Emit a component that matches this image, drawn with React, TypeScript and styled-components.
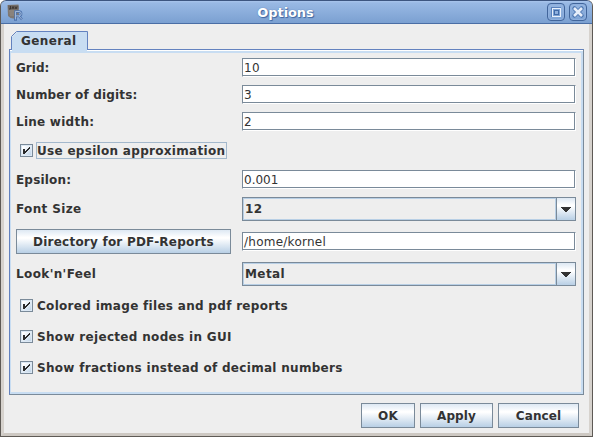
import React from "react";
import styled, { createGlobalStyle } from "styled-components";

const Global = createGlobalStyle`
  * { box-sizing: border-box; }
  body { margin: 0; background: #fff; overflow: hidden; }
`;

const steel = "#7a8a99";
const gloss = "linear-gradient(#dde8f3 0%, #ffffff 32%, #ffffff 36%, #b8cfe5 100%)";

const Window = styled.div`
  width: 593px;
  height: 437px;
  display: flex;
  flex-direction: column;
  background: #eeeeee;
  border: 1px solid #5e5a55;
  border-top: 0;
  border-radius: 6px 6px 0 0;
  overflow: hidden;
  color: #333333;
  font: bold 12px/16px "DejaVu Sans", sans-serif;
  white-space: nowrap;
`;

const TitleBar = styled.header`
  flex: none;
  height: 24px;
  margin: 0 -1px;
  display: grid;
  grid-template-columns: 40px 1fr 62px;
  align-items: center;
  border: 1px solid #4a6ea5;
  border-top-color: #3d5680;
  border-radius: 6px 6px 0 0;
  background: linear-gradient(#a9c5ec 0, #99b9e4 2px, #7ba0d1 100%);
`;

const AppIcon = styled.svg`
  margin: 0 0 0 6px;
  display: block;
`;

const Title = styled.h1<{ $ls: number }>`
  margin: 1px 0 0;
  text-align: center;
  font-size: 13px;
  line-height: 18px;
  letter-spacing: ${(p) => p.$ls}px;
  color: #fff;
  text-shadow: 0 0 1px #3f66a0, 1px 1px 1px #3f66a0;
`;

const WindowControls = styled.div`
  display: flex;
  justify-content: flex-end;
  gap: 4px;
  padding: 0 5px 0 0;
`;

const ControlButton = styled.button`
  width: 18px;
  height: 18px;
  padding: 0;
  border: 1px solid #41659b;
  border-radius: 4px;
  background: linear-gradient(#95b5e0, #7fa4d5);
  box-shadow: inset 0 0 0 1px #8fb0de;
  svg { display: block; }
`;

const Body = styled.main`
  flex: 1;
  display: flex;
  flex-direction: column;
  border: solid #d6d2cd;
  border-width: 0 3px 3px 3px;
  border-bottom-color: #cdc8c2;
  padding: 7px 5px 4px;
`;

const TabStrip = styled.div`
  height: 18px;
  padding-left: 2px;
  position: relative;
  z-index: 1;
`;

const Tab = styled.div`
  position: relative;
  width: 77px;
  height: 20px;
  svg { display: block; position: absolute; inset: 0; }
`;

const TabLabel = styled.span<{ $ls: number }>`
  position: relative;
  display: block;
  padding: 2px 0 0 10px;
  letter-spacing: ${(p) => p.$ls}px;
`;

const Panel = styled.section`
  width: 575px;
  height: 346px;
  border: 1px solid ${steel};
  border-top-color: #6382bf;
  border-left-color: #6382bf;
  box-shadow: inset 0 1px #fff, inset 0 3px #c8ddf2, inset 1px 0 #c8ddf2, inset -2px -2px #c8ddf2;
  padding: 8px 7px 0 6px;
  display: flex;
  flex-direction: column;
  gap: 8px;
`;

const Row = styled.div<{ $h: number }>`
  height: ${(p) => p.$h}px;
  display: grid;
  grid-template-columns: 215px 334px;
  column-gap: 11px;
  align-items: center;
`;

const Text = styled.span<{ $ls?: number }>`
  letter-spacing: ${(p) => p.$ls ?? 0}px;
`;

const Field = styled.div<{ $ls?: number }>`
  height: 19px;
  background: #fff;
  border: 1px solid ${steel};
  border-right-color: #fff;
  border-bottom-color: #fff;
  box-shadow: inset -1px -1px ${steel};
  padding: 1px 0 0 1px;
  font-weight: normal;
  letter-spacing: ${(p) => p.$ls ?? 0}px;
`;

const Combo = styled.div`
  height: 24px;
  display: grid;
  grid-template-columns: 1fr 19px;
  border: 1px solid ${steel};
`;

const ComboValue = styled.div`
  box-shadow: inset 0 0 0 1px #b8cfe5;
  padding: 3px 0 0 2px;
`;

const ComboArrow = styled.div`
  border-left: 1px solid ${steel};
  background: ${gloss};
  svg { display: block; margin: 9px 0 0 4px; }
`;

const Button = styled.button<{ $w: number }>`
  width: ${(p) => p.$w}px;
  height: 25px;
  padding: 0;
  border: 1px solid ${steel};
  background: ${gloss};
  color: inherit;
  font: inherit;
`;

const CheckRow = styled.label`
  height: 23px;
  padding-left: 4px;
  display: flex;
  align-items: center;
  gap: 3px;
`;

const CheckBox = styled.span`
  width: 13px;
  height: 13px;
  border: 1px solid ${steel};
  background: linear-gradient(135deg, #fff 20%, #b8cfe5);
  box-shadow: inset 0 0 0 1px #dce8f4;
  svg { display: block; }
`;

const CheckText = styled.span<{ $focus?: boolean; $ls: number }>`
  height: 17px;
  padding: 1px 1px 0 0;
  line-height: 15px;
  border: 1px solid ${(p) => (p.$focus ? "#a3b8cc" : "transparent")};
  letter-spacing: ${(p) => p.$ls}px;
`;

const Footer = styled.footer`
  display: flex;
  justify-content: flex-end;
  gap: 5px;
  padding: 8px 5px 0 0;
`;

const Check = ({ text, ls = 0.3, focus }: { text: string; ls?: number; focus?: boolean }) => (
  <CheckRow>
    <CheckBox>
      <svg width="11" height="11" shapeRendering="crispEdges">
        <path d="M2 4h2v2h1v-1h1v-1h1v-1h1v-1h1v2h-1v1h-1v1h-1v1h-1v1h-1v1h-2z" fill="#2b2b2b" />
      </svg>
    </CheckBox>
    <CheckText $focus={focus} $ls={ls}>{text}</CheckText>
  </CheckRow>
);

const Select = ({ value, ls }: { value: string; ls?: number }) => (
  <Combo>
    <ComboValue><Text $ls={ls}>{value}</Text></ComboValue>
    <ComboArrow>
      <svg width="10" height="5" shapeRendering="crispEdges">
        <path d="M0 0h10v1h-1v1h-1v1h-1v1h-1v1h-2v-1h-1v-1h-1v-1h-1v-1h-1z" fill="#333" />
      </svg>
    </ComboArrow>
  </Combo>
);

export default function App() {
  return (
    <>
      <Global />
      <Window>
        <TitleBar>
          <AppIcon width="17" height="17" viewBox="0 0 17 17">
            <path d="M.5 1l11-.5.5 11-3 3.500-5.500-1-2.500-2z" fill="#7f7872" />
            <path d="M1 1.500h10.500v4H1.500z" fill="#69625e" />
            <path d="M3.500 2v3H2M5 5l1-2.500L7 5M8 2.500L9 5l1-2.500" stroke="#38322f" strokeWidth=".9" fill="none" />
            <path d="M2 7h8M2.500 9h5M3 11h4" stroke="#968d85" />
            <path d="M8.500 15.500V7.500H12a2.200 2.200 0 0 1 0 4.400H9M12 12l3 3.500M7 15.500h3" stroke="#4e74ae" strokeWidth="2.400" fill="none" />
            <path d="M8.500 15.500V7.500H12a2.200 2.200 0 0 1 0 4.400H9M12 12l3 3.500" stroke="#a9bfdf" strokeWidth=".9" fill="none" />
          </AppIcon>
          <Title $ls={-0.1}>Options</Title>
          <WindowControls>
            <ControlButton aria-label="Maximize">
              <svg width="16" height="16" shapeRendering="crispEdges">
                <path d="M3 3h10v10H3z" fill="#5a82bd" />
                <path d="M4.500 4.500h8v8h-8z" stroke="#e8f0fb" fill="#7da3d6" />
                <path d="M6 6h5v5H6z" fill="#416aa7" />
                <path d="M7 7h3v3H7z" fill="#8fb0de" />
              </svg>
            </ControlButton>
            <ControlButton aria-label="Close">
              <svg width="16" height="16">
                <path d="M4.500 4.500l7 7M11.500 4.500l-7 7" stroke="#5079b4" strokeWidth="4.500" strokeLinecap="round" />
                <path d="M4 4l8 8M12 4l-8 8" stroke="#e6eefa" strokeWidth="2.600" />
              </svg>
            </ControlButton>
          </WindowControls>
        </TitleBar>
        <Body>
          <TabStrip>
            <Tab>
              <svg width="77" height="21">
                <path d="M1 21V6L6 1h70v20z" fill="#c8ddf2" />
                <path d="M.5 18V5.500L5.500 .5h71V18" fill="none" stroke="#6382bf" />
              </svg>
              <TabLabel $ls={0.4}>General</TabLabel>
            </Tab>
          </TabStrip>
          <Panel>
            <Row $h={19}><Text>Grid:</Text><Field $ls={0.3}>10</Field></Row>
            <Row $h={19}><Text $ls={0.17}>Number of digits:</Text><Field>3</Field></Row>
            <Row $h={19}><Text $ls={0.25}>Line width:</Text><Field>2</Field></Row>
            <Check text="Use epsilon approximation" focus />
            <Row $h={19}><Text $ls={0.17}>Epsilon:</Text><Field>0.001</Field></Row>
            <Row $h={24}><Text $ls={0.36}>Font Size</Text><Select value="12" ls={0.3} /></Row>
            <Row $h={25}><Button $w={215}><Text $ls={0.22}>Directory for PDF-Reports</Text></Button><Field $ls={0.25}>/home/kornel</Field></Row>
            <Row $h={24}><Text $ls={0.38}>Look'n'Feel</Text><Select value="Metal" ls={0.4} /></Row>
            <Check text="Colored image files and pdf reports" />
            <Check text="Show rejected nodes in GUI" ls={0.32} />
            <Check text="Show fractions instead of decimal numbers" />
          </Panel>
          <Footer>
            <Button $w={54}><Text $ls={0.2}>OK</Text></Button>
            <Button $w={73}><Text $ls={0.1}>Apply</Text></Button>
            <Button $w={81}><Text $ls={0.1}>Cancel</Text></Button>
          </Footer>
        </Body>
      </Window>
    </>
  );
}
